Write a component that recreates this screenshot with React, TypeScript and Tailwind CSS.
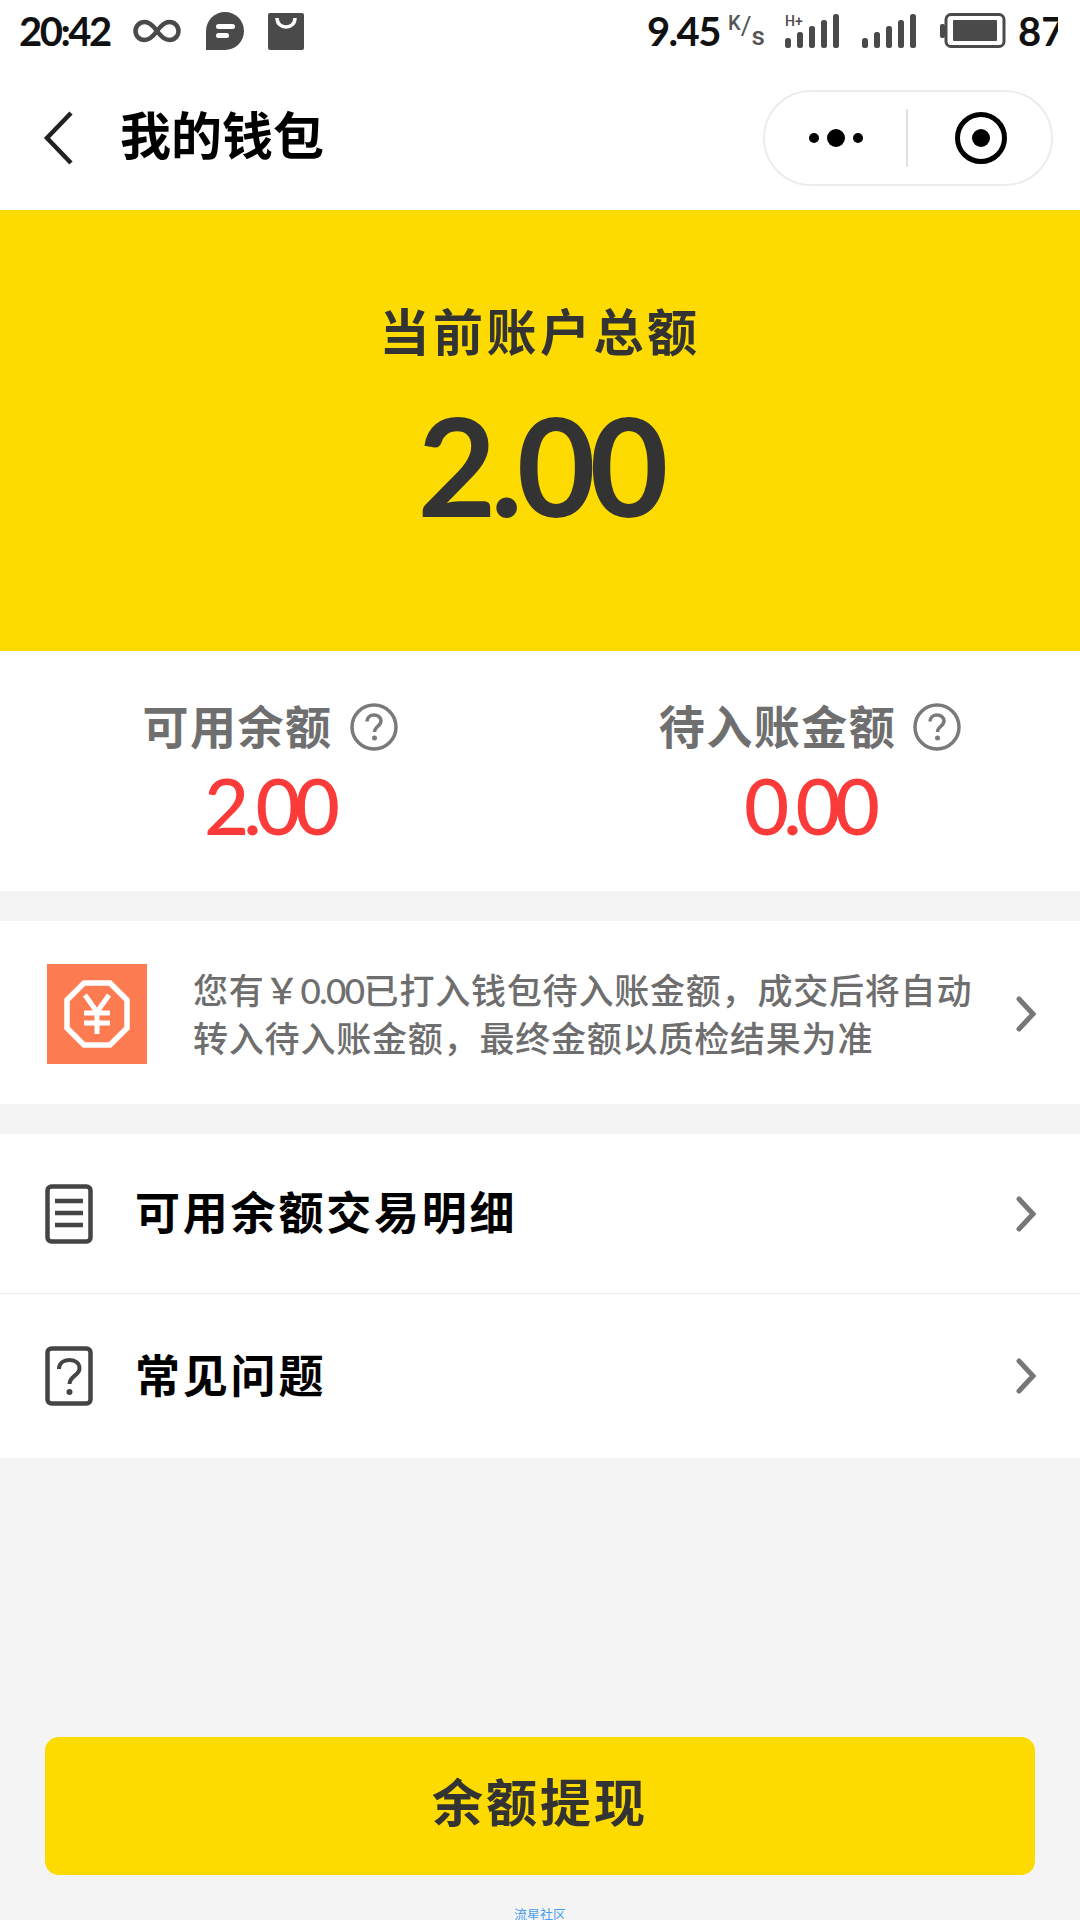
const font = "font-['Lato','Noto_Sans_CJK_SC',sans-serif]";

function Chevron() {
  return (
    <svg width="20" height="36" viewBox="0 0 20 36" className="shrink-0">
      <path d="M3 3l14 15L3 33" fill="none" stroke="#777" strokeWidth="5" strokeLinecap="round" />
    </svg>
  );
}

function HelpCircle() {
  return (
    <svg width="48" height="48" viewBox="0 0 48 48" className="shrink-0">
      <circle cx="24" cy="24" r="22" fill="none" stroke="#7a7a7a" strokeWidth="3.500" />
      <path d="M17 18.500c0-4 3.200-6.500 7-6.500s7 2.500 7 6c0 5-6.500 5.500-6.500 11" fill="none" stroke="#7a7a7a" strokeWidth="3.500" />
      <circle cx="24.500" cy="35" r="2.500" fill="#7a7a7a" />
    </svg>
  );
}

function StatusBar() {
  return (
    <div className="flex h-[60px] items-center justify-between pl-[19px] pr-[22px] pt-[2px] text-[#111]">
      <div className="flex items-center">
        <span className="text-[40px] font-bold leading-none tracking-[-2.5px]">20:42</span>
        <svg width="48" height="26" viewBox="0 0 48 26" className="ml-[23px]">
          <path d="M24 13C19 6 15 4 11.500 4a9 9 0 0 0 0 18C15 22 19 20 24 13c5-7 9-9 12.500-9a9 9 0 0 1 0 18C33 22 29 20 24 13Z" fill="none" stroke="#4a4a4a" strokeWidth="4.500" />
        </svg>
        <svg width="38" height="38" viewBox="0 0 38 38" className="ml-[25px]">
          <path d="M19 0a19 19 0 0 1 0 38H0V19A19 19 0 0 1 19 0Z" fill="#4a4a4a" />
          <rect x="10" y="12" width="19" height="5" rx="2.500" fill="#fff" />
          <rect x="10" y="21" width="13" height="5" rx="2.500" fill="#fff" />
        </svg>
        <svg width="36" height="37" viewBox="0 0 36 37" className="ml-[24px]">
          <rect width="36" height="37" rx="2" fill="#4a4a4a" />
          <path d="M9 5c0 12 18 12 18 0" fill="none" stroke="#fff" strokeWidth="3.500" />
        </svg>
      </div>
      <div className="flex items-center">
        <span className="text-[40px] font-bold leading-none tracking-[-1.5px]">9.45</span>
        <span className="ml-[8px] flex h-[36px] w-[38px] font-['Roboto'] font-medium leading-none text-[#555]">
          <span className="self-start text-[20px]">K</span>
          <span className="text-[26px] font-normal">/</span>
          <span className="self-end text-[26px]">s</span>
        </span>
        <svg width="56" height="36" viewBox="0 0 56 36" className="ml-[19px]">
          <text x="0" y="13" fontSize="14" fontWeight="500" fontFamily="Roboto" fill="#4a4a4a">H+</text>
          <rect x="0" y="25" width="6" height="10" rx="2.500" fill="#4a4a4a" />
          <rect x="12" y="19" width="6" height="16" rx="2.500" fill="#4a4a4a" />
          <rect x="24" y="13" width="6" height="22" rx="2.500" fill="#4a4a4a" />
          <rect x="36" y="7" width="6" height="28" rx="2.500" fill="#4a4a4a" />
          <rect x="48" y="1" width="6" height="34" rx="2.500" fill="#4a4a4a" />
        </svg>
        <svg width="56" height="36" viewBox="0 0 56 36" className="ml-[21px]">
          <rect x="0" y="25" width="6" height="10" rx="2.500" fill="#4a4a4a" />
          <rect x="12" y="19" width="6" height="16" rx="2.500" fill="#4a4a4a" />
          <rect x="24" y="13" width="6" height="22" rx="2.500" fill="#4a4a4a" />
          <rect x="36" y="7" width="6" height="28" rx="2.500" fill="#4a4a4a" />
          <rect x="48" y="1" width="6" height="34" rx="2.500" fill="#4a4a4a" />
        </svg>
        <svg width="66" height="36" viewBox="0 0 66 36" className="ml-[22px]">
          <rect x="0" y="11" width="5" height="14" rx="2" fill="#4a4a4a" />
          <rect x="6" y="1.500" width="58" height="32" rx="5" fill="none" stroke="#4a4a4a" strokeWidth="3" />
          <rect x="13" y="7" width="44" height="21" rx="1" fill="#4a4a4a" />
        </svg>
        <span className="ml-[12px] w-[40px] overflow-hidden text-[40px] font-bold leading-none">87</span>
      </div>
    </div>
  );
}

function NavBar() {
  return (
    <div className="flex h-[150px] items-center justify-between bg-white pl-[42px] pr-[27px] pt-[5px]">
      <div className="flex items-center">
        <svg width="32" height="54" viewBox="0 0 32 54" className="ml-[1px]">
          <path d="M28 2 4 27l24 25" fill="none" stroke="#222" strokeWidth="4.500" />
        </svg>
        <span className="mb-[5px] ml-[45px] text-[51px] font-bold leading-none text-black">我的钱包</span>
      </div>
      <div className="flex h-[96px] w-[290px] items-center rounded-full border-2 border-[#ececec]">
        <div className="flex flex-1 items-center justify-center gap-[8px]">
          <span className="size-[10px] rounded-full bg-black" />
          <span className="size-[18px] rounded-full bg-black" />
          <span className="size-[10px] rounded-full bg-black" />
        </div>
        <div className="h-[58px] w-[2px] bg-[#e2e2e2]" />
        <div className="flex flex-1 items-center justify-center pl-[2px]">
          <svg width="52" height="52" viewBox="0 0 52 52">
            <circle cx="26" cy="26" r="23.500" fill="none" stroke="#000" strokeWidth="5" />
            <circle cx="26" cy="26" r="9" fill="#000" />
          </svg>
        </div>
      </div>
    </div>
  );
}

function Balance({ label, value }: { label: string; value: string }) {
  return (
    <div className="flex flex-1 flex-col items-center">
      <div className="flex items-center gap-[17px]">
        <span className="text-[46px] font-bold leading-none tracking-[1.500px] text-[#6f6f6f]">{label}</span>
        <HelpCircle />
      </div>
      <span className="mr-[2px] mt-[15px] text-[78px] font-medium leading-none tracking-[-6px] text-[#fb3a3a]">{value}</span>
    </div>
  );
}

function MenuRow({ icon, label, className }: { icon: React.ReactNode; label: string; className: string }) {
  return (
    <div className={`flex items-center pl-[45px] pr-[44px] ${className}`}>
      {icon}
      <span className="ml-[42px] flex-1 text-[45px] font-bold leading-none tracking-[2.800px] text-black">{label}</span>
      <Chevron />
    </div>
  );
}

export default function App() {
  return (
    <div className={`flex h-[1920px] w-[1080px] flex-col overflow-hidden bg-[#f4f4f4] ${font}`}>
      <div className="bg-white">
        <StatusBar />
        <NavBar />
      </div>

      <div className="flex h-[441px] flex-col items-center bg-[#fddb00] pt-[97px]">
        <span className="text-[50px] font-bold leading-none tracking-[3.500px] text-[#333]">当前账户总额</span>
        <span className="mt-[40px] text-[136px] font-bold leading-none tracking-[-6px] text-[#333]">2.00</span>
      </div>

      <div className="flex h-[240px] bg-white pt-[52px]">
        <Balance label="可用余额" value="2.00" />
        <Balance label="待入账金额" value="0.00" />
      </div>

      <div className="mt-[30px] flex h-[183px] items-center bg-white pl-[47px] pr-[44px] pt-[2px]">
        <div className="flex size-[100px] shrink-0 items-center justify-center bg-[#fd7b51]">
          <svg width="66" height="68" viewBox="0 0 66 68">
            <path d="M20 3h26L63 20v28L46 65H20L3 48V20Z" fill="none" stroke="#fff" strokeWidth="5.500" />
            <path d="M21 15l12 17 12-17M33 32v22M20 33h26M20 43h26" fill="none" stroke="#fff" strokeWidth="5" />
          </svg>
        </div>
        <p className="ml-[46px] w-[800px] text-[35px] font-medium leading-[48px] tracking-[0.800px] text-[#6e6e6e]">
          您有￥<span className="tracking-[-1.500px]">0.00</span>已打入钱包待入账金额，成交后将自动
          <br />
          转入待入账金额，最终金额以质检结果为准
        </p>
        <div className="ml-auto">
          <Chevron />
        </div>
      </div>

      <div className="mt-[30px] flex h-[324px] flex-col bg-white">
        <MenuRow
          className="h-[160px] border-b border-[#ececec]"
          label="可用余额交易明细"
          icon={
            <svg width="48" height="60" viewBox="0 0 48 60">
              <rect x="2.500" y="2.500" width="43" height="55" rx="4" fill="none" stroke="#444" strokeWidth="4.500" />
              <path d="M10 17h28M10 29h28M10 41h28" stroke="#444" strokeWidth="4.500" />
            </svg>
          }
        />
        <MenuRow
          className="flex-1"
          label="常见问题"
          icon={
            <svg width="48" height="60" viewBox="0 0 48 60">
              <rect x="2.500" y="2.500" width="43" height="55" rx="4" fill="none" stroke="#444" strokeWidth="4.500" />
              <path d="M14 23c0-6 4.500-9 10.500-9s10 3 10 8.500c0 7-10 7.500-10 15.500" fill="none" stroke="#444" strokeWidth="4" />
              <circle cx="24.500" cy="46" r="3" fill="#444" />
            </svg>
          }
        />
      </div>

      <div className="mt-[279px] flex h-[138px] w-[990px] items-center justify-center self-center rounded-[14px] bg-[#fddb00] pb-[8px]">
        <span className="text-[51px] font-bold leading-none tracking-[3px] text-[#333]">余额提现</span>
      </div>
      <div className="mt-[33px] h-[12px] text-center text-[13px] leading-none text-[#4a9ff0]">流星社区</div>
    </div>
  );
}
